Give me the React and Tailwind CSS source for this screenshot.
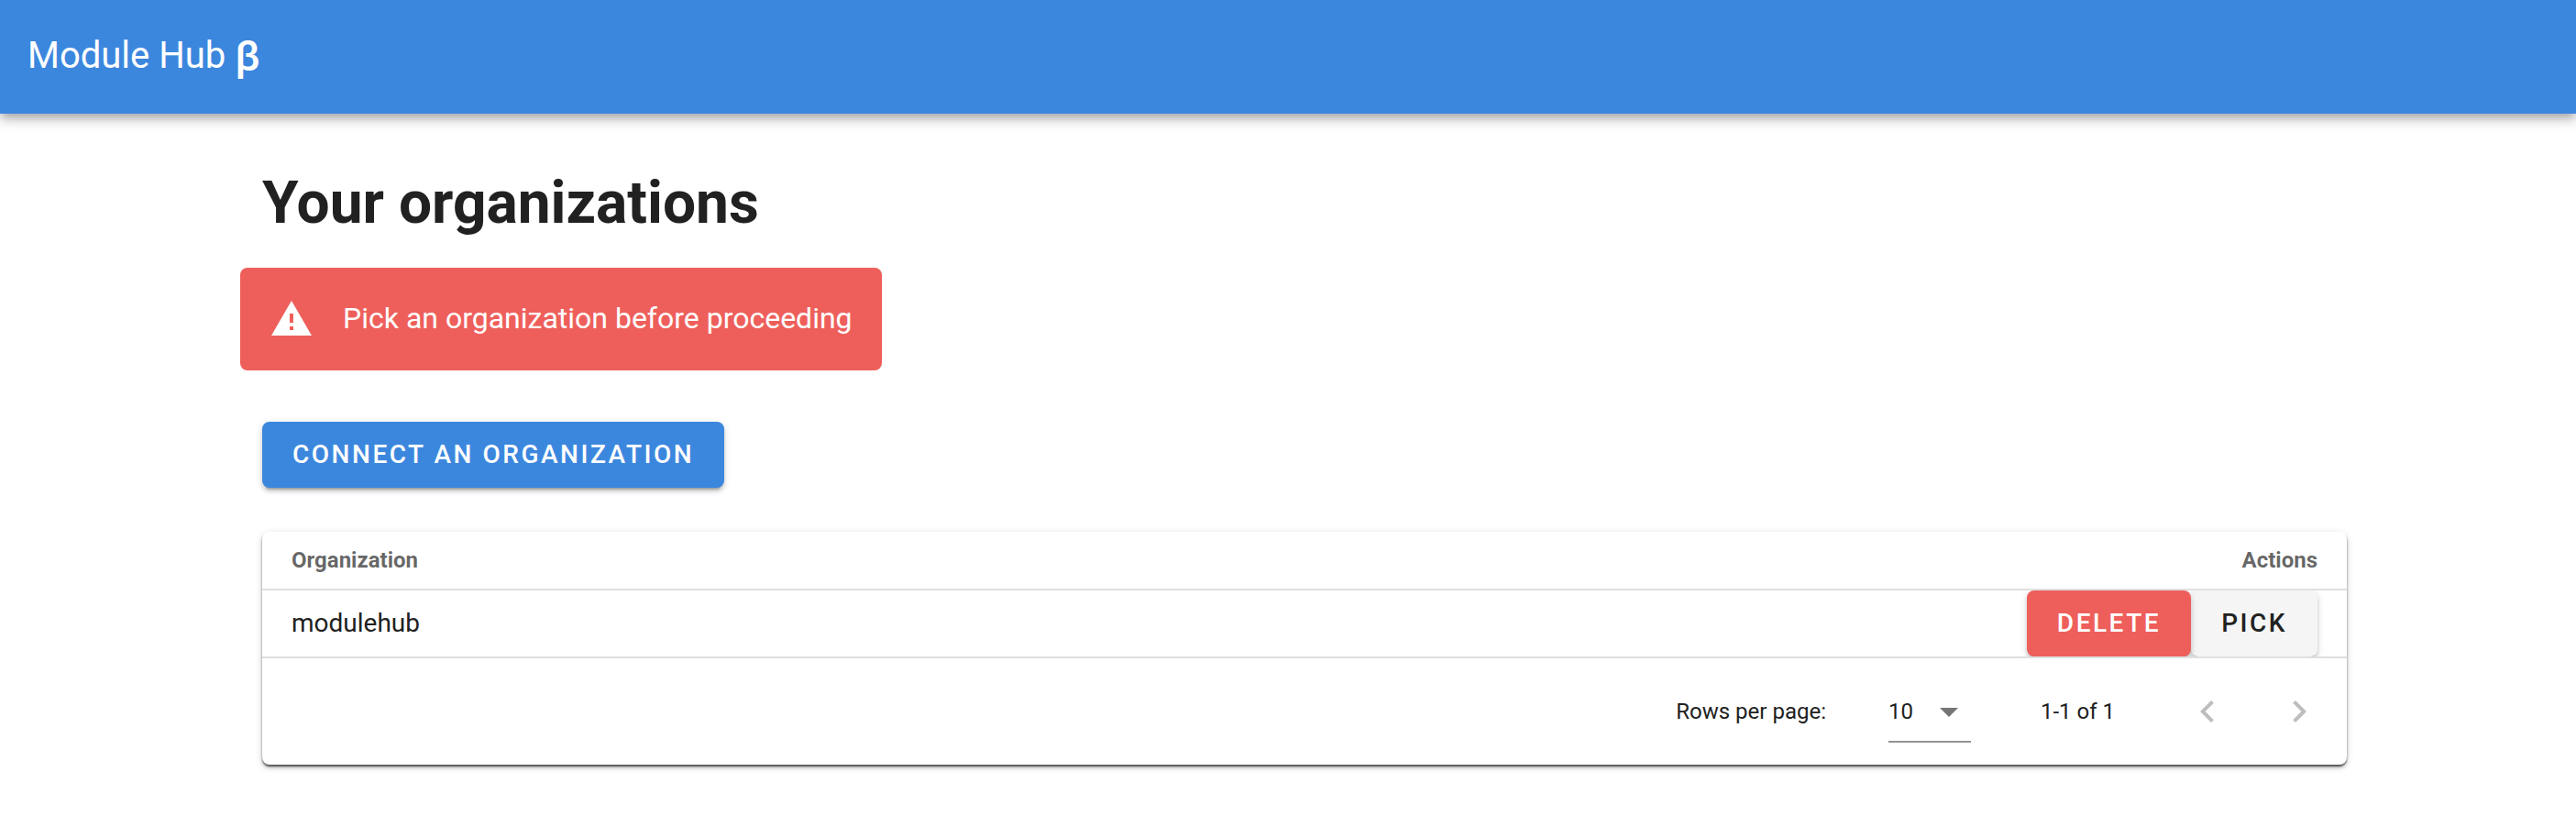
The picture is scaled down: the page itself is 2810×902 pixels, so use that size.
const raised =
  'shadow-[0_6px_2px_-4px_rgba(0,0,0,0.2),0_4px_4px_0_rgba(0,0,0,0.14),0_2px_10px_0_rgba(0,0,0,0.12)]';
const buttonBase =
  'block h-[72px] rounded-lg px-[33px] text-[28px] leading-none font-medium uppercase tracking-[0.09em] ' + raised;

function Icon({ path, className = '' }) {
  return (
    <svg viewBox="0 0 24 24" aria-hidden="true" className={'size-12 shrink-0 fill-current ' + className}>
      <path d={path} />
    </svg>
  );
}

function AppBar() {
  return (
    <header className="flex h-[124px] items-center bg-[#3c87de] px-[30px] pb-0.5 text-white shadow-[0_4px_8px_-2px_rgba(0,0,0,0.2),0_8px_10px_0_rgba(0,0,0,0.14),0_2px_20px_0_rgba(0,0,0,0.12)]">
      <div className="flex items-center gap-2.5 text-[40px] leading-[48px]">
        <span>Module Hub</span>
        <span className="text-[46px] font-medium">β</span>
      </div>
    </header>
  );
}

function OrganizationsTable() {
  return (
    <section className="mt-12 rounded-lg bg-white shadow-[0_6px_2px_-4px_rgba(0,0,0,0.2),0_4px_4px_0_rgba(0,0,0,0.14),0_2px_10px_0_rgba(0,0,0,0.12),0_2px_2px_0_rgba(0,0,0,0.5)]">
      <table className="w-full border-separate border-spacing-0">
        <thead>
          <tr className="text-2xl text-black/60">
            <th className="h-16 border-b-2 border-[#e0e0e0] px-8 py-0 text-left font-bold">Organization</th>
            <th className="h-16 border-b-2 border-[#e0e0e0] px-8 py-0 text-right font-bold">Actions</th>
          </tr>
        </thead>
        <tbody>
          <tr>
            <td className="border-b-2 border-[#e0e0e0] px-8 text-[28px]">modulehub</td>
            <td className="border-b-2 border-[#e0e0e0] px-8">
              <div className="flex justify-end overflow-x-visible overflow-y-clip">
                <button type="button" className={buttonBase + ' relative bg-[#ee5f5b] text-white'}>Delete</button>
                <button type="button" className={buttonBase + ' bg-[#f5f5f5]'}>Pick</button>
              </div>
            </td>
          </tr>
        </tbody>
      </table>
      <footer className="flex h-[116px] items-center justify-end pr-4 text-2xl">
        <label htmlFor="rows-per-page">Rows per page:</label>
        <div className="ml-[68px] grid w-[90px] border-b-2 border-[#949494] pt-2">
          <select
            id="rows-per-page"
            defaultValue="10"
            className="col-start-1 row-start-1 h-[58px] appearance-none bg-transparent pb-1.5 outline-none"
          >
            <option>5</option>
            <option>10</option>
            <option>15</option>
          </select>
          <Icon path="M7,10L12,15L17,10H7Z" className="pointer-events-none col-start-1 row-start-1 mt-0.5 justify-self-end text-[#757575]" />
        </div>
        <span className="ml-[76px]">1-1 of 1</span>
        <div className="ml-[65px] flex gap-7 text-[#bdbdbd]">
          <button type="button" disabled aria-label="Previous page" className="grid size-[72px] place-items-center">
            <Icon path="M15.41,16.58L10.83,12L15.41,7.41L14,6L8,12L14,18L15.41,16.58Z" />
          </button>
          <button type="button" disabled aria-label="Next page" className="grid size-[72px] place-items-center">
            <Icon path="M8.59,16.58L13.17,12L8.59,7.41L10,6L16,12L10,18L8.59,16.58Z" />
          </button>
        </div>
      </footer>
    </section>
  );
}

export default function App() {
  return (
    <div className="min-h-screen bg-white font-[Roboto,sans-serif] text-[#212121]">
      <AppBar />
      <main className="pt-[50px] pr-[250px] pb-8 pl-[286px]">
        <h1 className="text-[64px] leading-[96px] font-bold">Your organizations</h1>
        <div role="alert" className="mt-[22px] -ml-6 flex h-28 w-fit items-center gap-8 rounded-lg bg-[#ee5f5b] px-8 text-[32px] leading-[48px] text-white">
          <Icon path="M13 14H11V9H13M13 18H11V16H13M1 21H23L12 2L1 21Z" />
          <span className="pb-0.5">Pick an organization before proceeding</span>
        </div>
        <button type="button" className={buttonBase + ' mt-14 bg-[#3c87de] text-white'}>Connect an organization</button>
        <OrganizationsTable />
      </main>
    </div>
  );
}
